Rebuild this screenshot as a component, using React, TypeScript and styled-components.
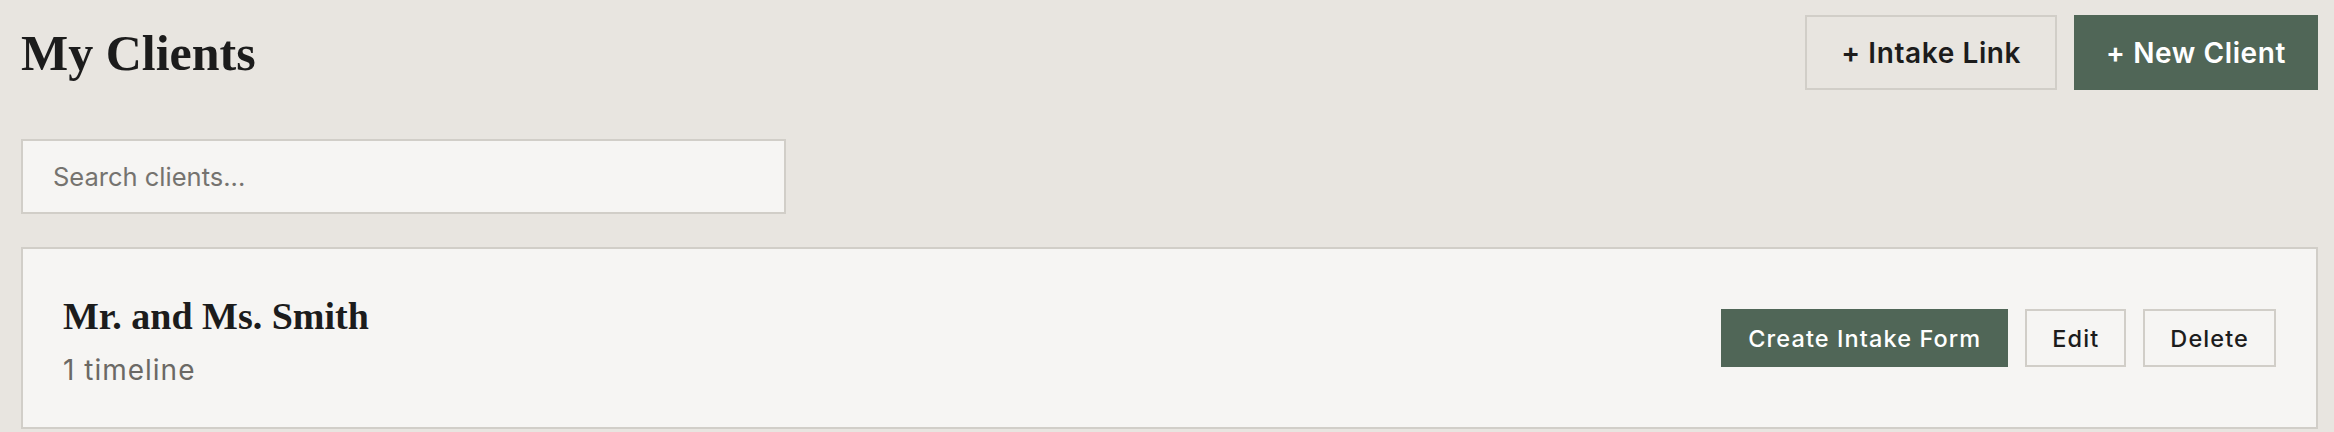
import React, { useState } from 'react'
import styled, { createGlobalStyle } from 'styled-components'

const serif = `'Liberation Serif', 'DejaVu Serif', serif`
const sans = `Inter, 'Open Sans', 'DejaVu Sans', sans-serif`

const GlobalStyle = createGlobalStyle`
  html, body {
    margin: 0;
    padding: 0;
    background: #e8e5e0;
  }
  * {
    box-sizing: border-box;
  }
`

const Page = styled.div`
  padding: 15px 16px 0 21px;
  font-family: ${sans};
  color: #1c1c1c;
`

const Header = styled.div`
  display: flex;
  align-items: center;
  justify-content: space-between;
  height: 75px;
`

const Title = styled.h1`
  margin: 0;
  font-family: ${serif};
  font-weight: 700;
  font-size: 50px;
  line-height: 1;
  color: #1c1c1c;
`

const Actions = styled.div`
  display: flex;
  gap: 17px;
`

const Button = styled.button<{ $primary?: boolean; $size?: 'lg' | 'sm' }>`
  font-family: ${sans};
  font-weight: ${(p) => (p.$size === 'sm' ? 500 : 600)};
  font-size: ${(p) => (p.$size === 'sm' ? '23.5px' : '28px')};
  letter-spacing: ${(p) => (p.$size === 'sm' ? '1.1px' : '0.6px')};
  height: ${(p) => (p.$size === 'sm' ? '58px' : '75px')};
  padding: ${(p) => (p.$size === 'sm' ? '0 25px' : p.$primary ? '0 30px' : '0 34px')};
  border: 2px solid ${(p) => (p.$primary ? '#506657' : '#d1cec8')};
  background: ${(p) => (p.$primary ? '#506657' : 'transparent')};
  color: ${(p) => (p.$primary ? '#ffffff' : '#1c1c1c')};
  border-radius: 0;
  cursor: pointer;
  white-space: nowrap;
`

const Search = styled.input`
  display: block;
  margin-top: 49px;
  width: 765px;
  height: 75px;
  padding: 0 30px;
  border: 2px solid #d1cec8;
  background: #f6f5f3;
  font-family: ${sans};
  font-size: 25.5px;
  color: #1c1c1c;
  outline: none;
  &::placeholder {
    color: #75736f;
  }
`

const List = styled.div`
  margin-top: 33px;
  display: flex;
  flex-direction: column;
  gap: 16px;
`

const Card = styled.div`
  display: flex;
  align-items: center;
  justify-content: space-between;
  height: 182px;
  padding: 0 40px;
  border: 2px solid #d1cec8;
  background: #f6f5f3;
`

const ClientInfo = styled.div`
  display: flex;
  flex-direction: column;
  gap: 13px;
  margin-top: 5px;
`

const ClientName = styled.h2`
  margin: 0;
  font-family: ${serif};
  font-weight: 700;
  font-size: 38px;
  line-height: 1.2;
  color: #1c1c1c;
`

const ClientMeta = styled.span`
  font-size: 28px;
  letter-spacing: 1px;
  color: #6b6965;
`

const CardActions = styled.div`
  display: flex;
  gap: 17px;
`

const clients = [{ id: 1, name: 'Mr. and Ms. Smith', timelines: 1 }]

const App = () => {
  const [query, setQuery] = useState<string>('')

  const visible = clients.filter((c) => c.name.toLowerCase().includes(query.toLowerCase()))

  return (
    <Page>
      <GlobalStyle />
      <Header>
        <Title>My Clients</Title>
        <Actions>
          <Button>+ Intake Link</Button>
          <Button $primary>+ New Client</Button>
        </Actions>
      </Header>
      <Search placeholder='Search clients...' value={query} onChange={(e) => setQuery(e.target.value)} />
      <List>
        {visible.map((c) => (
          <Card key={c.id}>
            <ClientInfo>
              <ClientName>{c.name}</ClientName>
              <ClientMeta>
                {c.timelines} timeline{c.timelines === 1 ? '' : 's'}
              </ClientMeta>
            </ClientInfo>
            <CardActions>
              <Button $primary $size='sm'>
                Create Intake Form
              </Button>
              <Button $size='sm'>Edit</Button>
              <Button $size='sm'>Delete</Button>
            </CardActions>
          </Card>
        ))}
      </List>
    </Page>
  )
}

export default App
